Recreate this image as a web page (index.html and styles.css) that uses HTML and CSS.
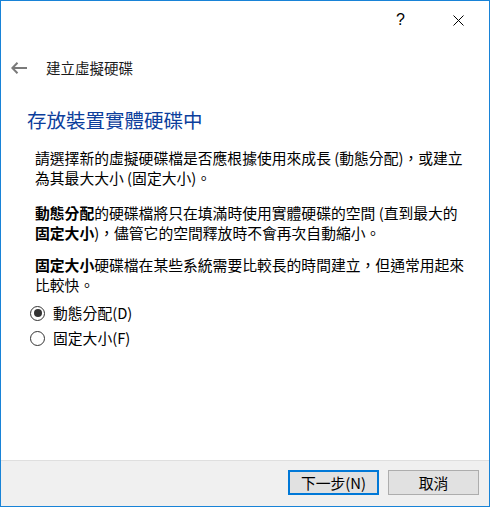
FILE: index.html
```html
<!DOCTYPE html>
<html lang="zh-Hant">
<head>
<meta charset="utf-8">
<title>建立虛擬硬碟</title>
<link rel="stylesheet" href="styles.css">
</head>
<body>
<div class="window">
  <div class="titlebar">
    <span class="tb-btn help">?</span>
    <span class="tb-btn close">
      <svg width="11" height="11" viewBox="0 0 11 11"><path d="M0.5 0.5 L10.5 10.5 M10.5 0.5 L0.5 10.5" stroke="#000" stroke-width="1" fill="none"/></svg>
    </span>
  </div>
  <div class="header">
    <svg class="back" width="16" height="12" viewBox="0 0 16 12"><path d="M1 6 H16 M6.5 0.8 L1.3 6 L6.5 11.2" stroke="#7a7a7a" stroke-width="2" fill="none"/></svg>
    <span class="header-title">建立虛擬硬碟</span>
  </div>
  <div class="content">
    <h1 class="heading">存放裝置實體硬碟中</h1>
    <p class="para">請選擇新的虛擬硬碟檔是否應根據使用來成長 (動態分配)，或建立<br>為其最大大小 (固定大小)。</p>
    <p class="para p2"><b>動態分配</b>的硬碟檔將只在填滿時使用實體硬碟的空間 (直到最大的<br><b>固定大小</b>)，儘管它的空間釋放時不會再次自動縮小。</p>
    <p class="para p3"><b>固定大小</b>硬碟檔在某些系統需要比較長的時間建立，但通常用起來<br>比較快。</p>
    <div class="options">
      <div class="option"><span class="radio checked"></span><span>動態分配(D)</span></div>
      <div class="option"><span class="radio"></span><span>固定大小(F)</span></div>
    </div>
  </div>
  <div class="footer">
    <button class="btn primary">下一步(N)</button>
    <button class="btn">取消</button>
  </div>
</div>
</body>
</html>
```

FILE: styles.css
```css
html, body {
  margin: 0;
  padding: 0;
  background: #fff;
}
body {
  font-family: "Noto Sans CJK TC", "Liberation Sans", sans-serif;
  color: #000;
}
.window {
  width: 490px;
  height: 507px;
  box-sizing: border-box;
  border: 1px solid #1883d7;
  display: flex;
  flex-direction: column;
  background: #fff;
}
.titlebar {
  height: 38px;
  display: flex;
  justify-content: flex-end;
  align-items: center;
  padding-right: 25px;
  gap: 48px;
}
.tb-btn {
  display: flex;
  align-items: center;
  justify-content: center;
}
.help {
  font-family: "Liberation Sans", sans-serif;
  font-size: 16px;
  line-height: 16px;
  color: #000;
}
.close svg {
  display: block;
}
.header {
  display: flex;
  align-items: center;
  height: 24px;
  margin-top: 17px;
  padding-left: 10px;
}
.back {
  display: block;
}
.header-title {
  margin-left: 19px;
  font-size: 14.5px;
  line-height: 24px;
  color: #1a1a1a;
}
.content {
  padding-left: 26px;
  padding-top: 27px;
}
.heading {
  margin: 0;
  font-weight: normal;
  font-size: 19.5px;
  line-height: 26px;
  color: #0c3e9c;
}
.para {
  margin: 0;
  padding-left: 8px;
  font-size: 14.8px;
  line-height: 20px;
  white-space: nowrap;
}
.heading + .para {
  margin-top: 15px;
}
.para.p2 {
  margin-top: 15px;
}
.para.p3 {
  margin-top: 12px;
}
.para b {
  font-weight: bold;
}
.options {
  margin-top: 8px;
  padding-left: 3px;
  display: flex;
  flex-direction: column;
  gap: 5px;
}
.option {
  display: flex;
  align-items: center;
  gap: 8px;
  font-size: 14.8px;
  line-height: 20px;
}
.radio {
  width: 15px;
  height: 15px;
  border: 1px solid #333;
  border-radius: 50%;
  box-sizing: border-box;
  display: inline-flex;
  align-items: center;
  justify-content: center;
}
.radio.checked::after {
  content: "";
  width: 8px;
  height: 8px;
  border-radius: 50%;
  background: #333;
}
.footer {
  margin-top: auto;
  height: 46px;
  background: #f0f0f0;
  border-top: 1px solid #dfdfdf;
  display: flex;
  justify-content: flex-end;
  align-items: center;
  gap: 9px;
  padding-right: 10px;
  padding-bottom: 2px;
  box-sizing: border-box;
}
.btn {
  width: 91px;
  height: 25px;
  margin: 0;
  padding: 0;
  background: #e1e1e1;
  border: 1px solid #adadad;
  font-family: "Noto Sans CJK TC", "Liberation Sans", sans-serif;
  font-size: 14.8px;
  line-height: 20px;
  color: #000;
  box-sizing: border-box;
}
.btn.primary {
  border: 2px solid #0078d7;
}
```
